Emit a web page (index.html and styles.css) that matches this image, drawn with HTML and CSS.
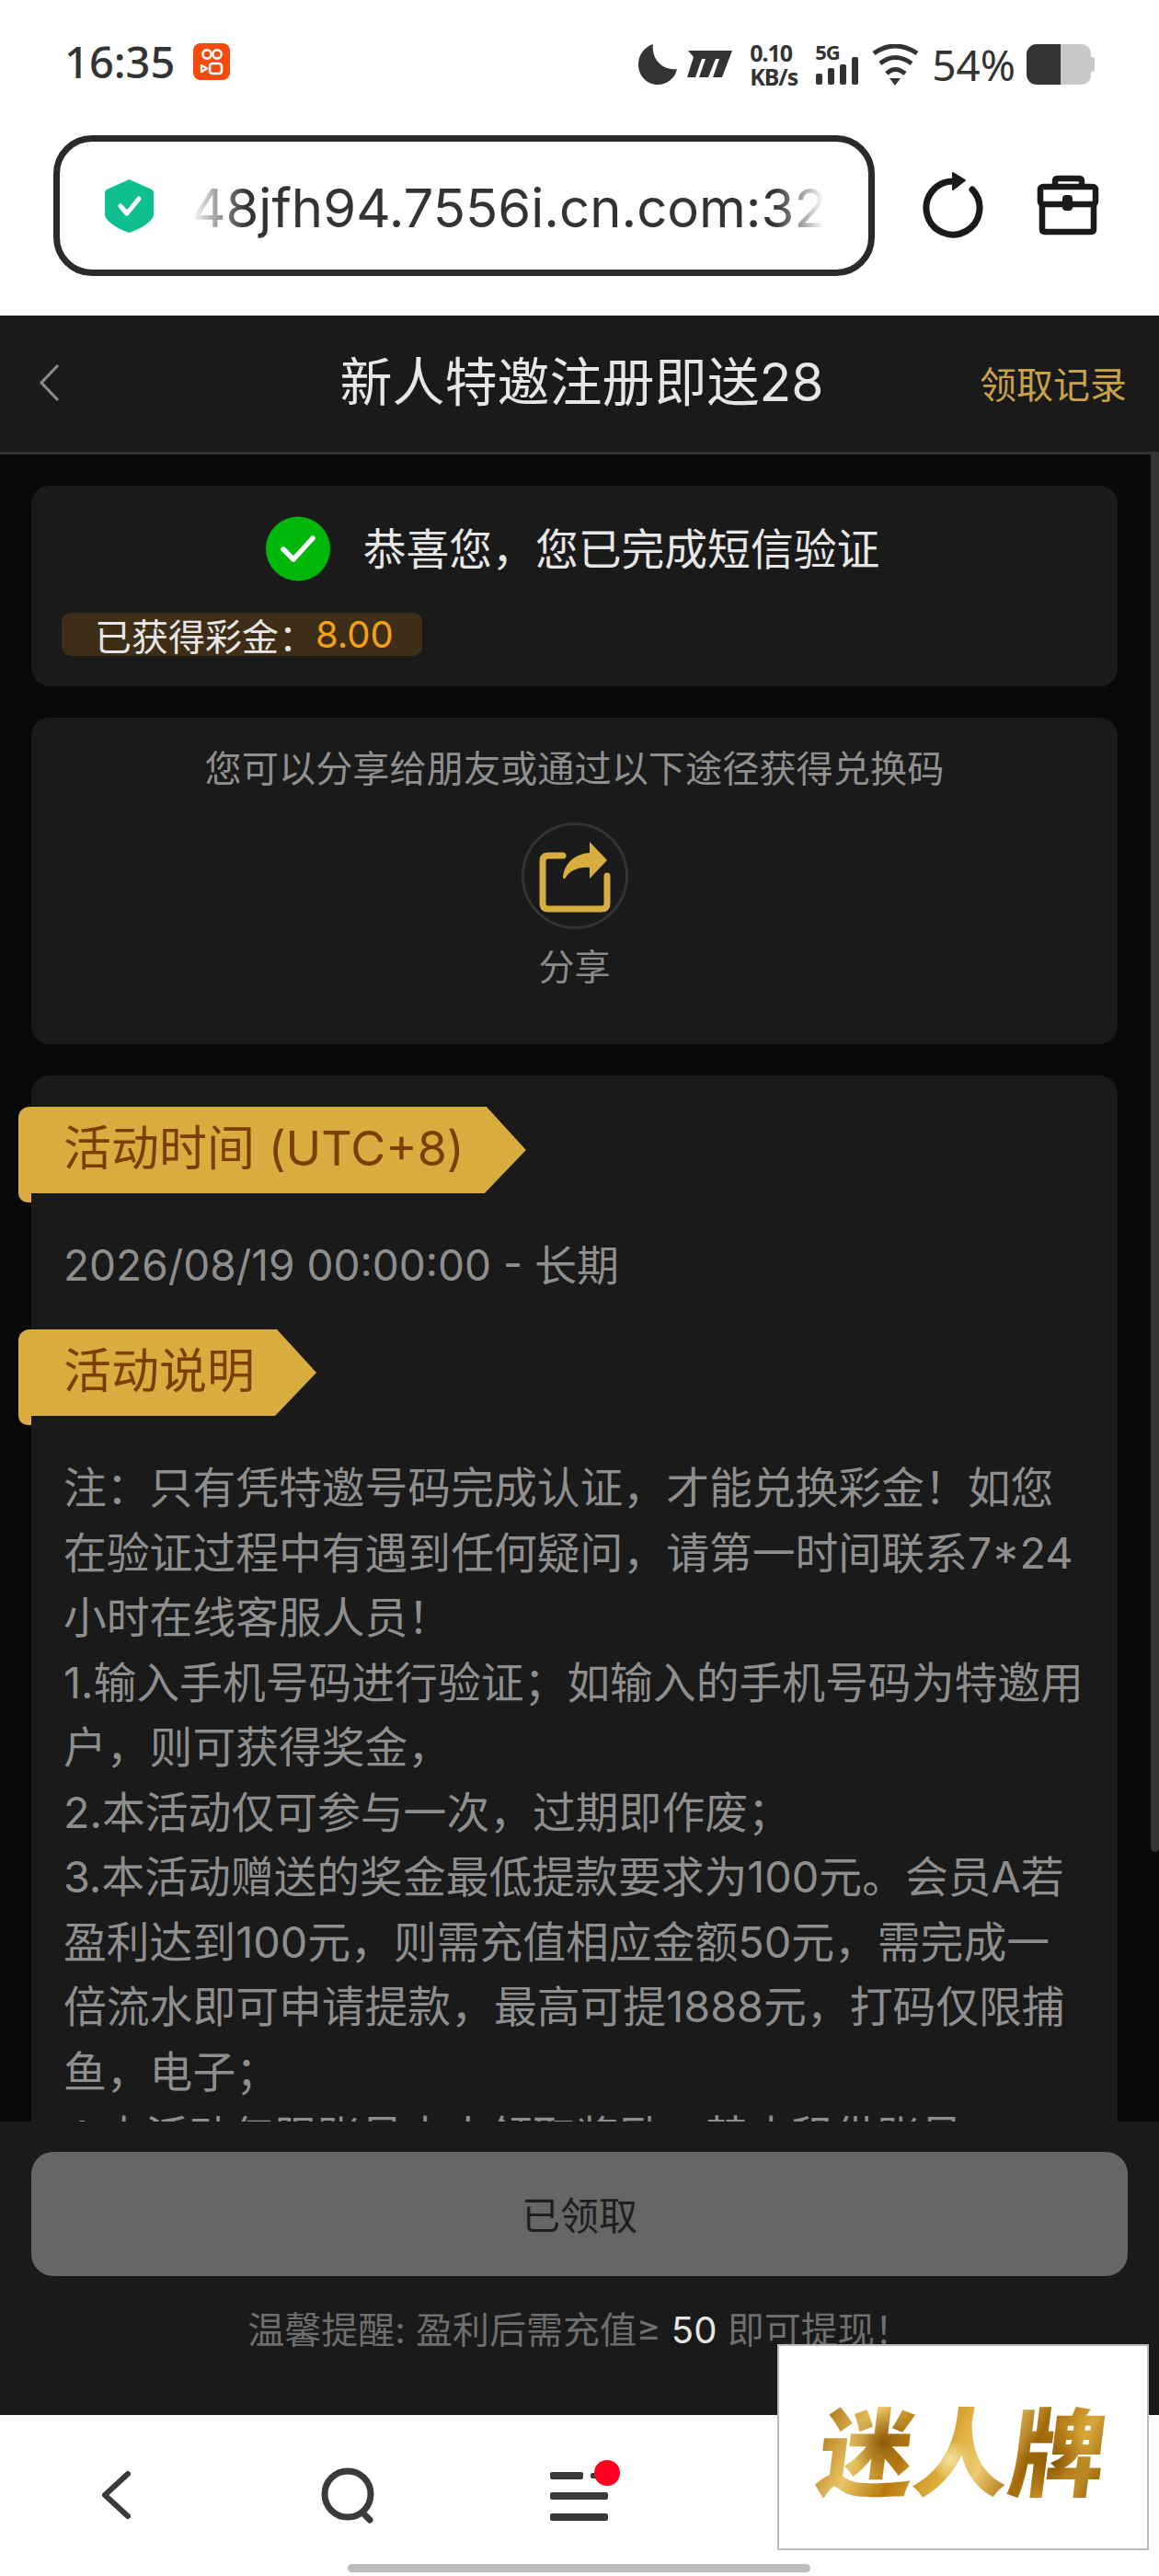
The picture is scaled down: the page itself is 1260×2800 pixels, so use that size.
FILE: index.html
```html
<!DOCTYPE html>
<html lang="zh-CN">
<head>
    <meta charset="UTF-8">
    <meta name="viewport" content="width=device-width, initial-scale=1.0">
    <title>新人特邀注册即送28</title>
    <link rel="stylesheet" href="styles.css">
</head>
<body>
    <header class="browser-top">
        <div class="status-bar">
            <div class="status-left">
                <span class="clock">16:35</span>
                <svg class="app-icon" width="40" height="40" viewBox="0 0 40 40">
                    <rect width="40" height="40" rx="8" fill="#f64a0f"/>
                    <circle cx="15" cy="12" r="4.6" fill="none" stroke="#fff" stroke-width="2.6"/>
                    <circle cx="26" cy="12" r="4.6" fill="none" stroke="#fff" stroke-width="2.6"/>
                    <rect x="18" y="22" width="13" height="11" rx="3" fill="none" stroke="#fff" stroke-width="2.6"/>
                    <path d="M9 24 L15 27.5 L9 31Z" fill="none" stroke="#fff" stroke-width="2.2" stroke-linejoin="round"/>
                </svg>
            </div>
            <div class="status-right">
                <svg width="42" height="44" viewBox="0 0 42 44"><path fill="#333" d="M16 0C14 14 24 29 42 27C40 37 31 44 21 44C9 44 0 34 0 22C0 11 7 3 16 0Z"/></svg>
                <svg class="carrier" width="49" height="30" viewBox="0 0 49 30"><path fill="#333" d="M1 0H49L38 29H28L35 9H31L23 29H13L20 9H16L9 29H0L7 7Z"/></svg>
                <div class="net-speed"><span>0.10</span><span>KB/s</span></div>
                <div class="signal">
                    <span class="signal-label">5G</span>
                    <svg width="48" height="30" viewBox="0 0 48 30">
                        <rect x="1" y="18" width="7" height="12" rx="2" fill="#333"/>
                        <rect x="14" y="12" width="7" height="18" rx="2" fill="#333"/>
                        <rect x="27" y="8" width="7" height="22" rx="2" fill="#333"/>
                        <rect x="40" y="0" width="7" height="30" rx="2" fill="#333"/>
                    </svg>
                </div>
                <svg class="wifi" width="52" height="45" viewBox="0 0 52 45">
                    <g fill="none" stroke="#333" stroke-width="5">
                        <path d="M3 10Q26 -6 50 10"/>
                        <path d="M10 21Q26 8 44 21"/>
                        <path d="M17 32Q26 23 37 32"/>
                    </g>
                    <path fill="#333" d="M20 37H32L26 45Z"/>
                </svg>
                <span class="battery-text">54%</span>
                <div class="battery"><span class="battery-fill"></span><span class="battery-empty"></span><span class="battery-nub"></span></div>
            </div>
        </div>
        <div class="toolbar">
            <div class="url-box">
                <svg class="shield" width="53" height="58" viewBox="0 0 53 58">
                    <path fill="#0fbf8f" d="M26.5 0L51 11Q53 12 53 15V38C53 46 36 55 26.5 58C17 55 0 46 0 38V15Q0 12 2 11Z"/>
                    <path fill="none" stroke="#fff" stroke-width="5" stroke-linecap="round" stroke-linejoin="round" d="M17 29L24 37L37 21"/>
                </svg>
                <span class="url-text">48jfh94.7556i.cn.com:324</span>
            </div>
            <svg class="reload" width="72" height="76" viewBox="0 -4 72 76">
                <path fill="none" stroke="#1a1a1a" stroke-width="7" stroke-linecap="round" d="M57 16A29 29 0 1 1 36 7"/>
                <path fill="#1a1a1a" stroke="#1a1a1a" stroke-width="2" stroke-linejoin="round" d="M36 -2L49 6L36 16Z"/>
            </svg>
            <svg class="toolbox" width="70" height="70" viewBox="0 0 70 70">
                <g fill="none" stroke="#1a1a1a" stroke-width="6.5" stroke-linejoin="round">
                    <rect x="5" y="14" width="60" height="19" rx="3"/>
                    <path d="M7 33V60Q7 63 10 63H60Q63 63 63 60V33"/>
                    <path d="M21 13V8Q21 5 24 5H47Q50 5 50 8V13"/>
                </g>
                <rect x="29" y="23" width="11" height="17" rx="4" fill="#1a1a1a"/>
            </svg>
        </div>
    </header>

    <div class="page-nav">
        <svg class="nav-back" width="26" height="42" viewBox="0 0 26 42"><path fill="none" stroke="#8f8f8f" stroke-width="3" d="M23 2L5 21L23 40"/></svg>
        <h1 class="nav-title">新人特邀注册即送28</h1>
        <span class="nav-link">领取记录</span>
    </div>

    <main class="content">
        <section class="card result-card">
            <div class="result-row">
                <svg width="70" height="71" viewBox="0 0 70 71">
                    <circle cx="35" cy="35.5" r="35" fill="#00b80a"/>
                    <path fill="none" stroke="#fff" stroke-width="5.5" stroke-linecap="round" stroke-linejoin="round" d="M19 36L30 47L51 24"/>
                </svg>
                <span class="result-text">恭喜您&#xFF0C;您已完成短信验证</span>
            </div>
            <div class="bonus-badge">已获得彩金&#xFF1A;<span class="bonus-amount">8.00</span></div>
        </section>

        <section class="card share-card">
            <p class="share-tip">您可以分享给朋友或通过以下途径获得兑换码</p>
            <div class="share-circle">
                <svg width="116" height="116" viewBox="0 0 116 116">
                    <path fill="none" stroke="#d8ac3e" stroke-width="7" stroke-linecap="round" d="M45 36H29Q23 36 23 42V88Q23 94 29 94H87Q93 94 93 88V58"/>
                    <path fill="#d8ac3e" d="M74 21L93 41L74 61V49C62 48 53 52 48 60Q45 63 45 59C47 44 58 34 74 33Z"/>
                </svg>
            </div>
            <div class="share-label">分享</div>
        </section>

        <section class="card info-card">
            <div class="ribbon"><h2 class="ribbon-body">活动时间 (UTC+8)</h2></div>
            <p class="info-date">2026/08/19 00:00:00 - 长期</p>
            <div class="ribbon ribbon-second"><h2 class="ribbon-body">活动说明</h2></div>
            <p class="info-text">
                注&#xFF1A;只有凭特邀号码完成认证&#xFF0C;才能兑换彩金&#xFF01;如您<br>
                在验证过程中有遇到任何疑问&#xFF0C;请第一时间联系7*24<br>
                小时在线客服人员&#xFF01;<br>
                1.输入手机号码进行验证&#xFF1B;如输入的手机号码为特邀用<br>
                户&#xFF0C;则可获得奖金&#xFF0C;<br>
                2.本活动仅可参与一次&#xFF0C;过期即作废&#xFF1B;<br>
                3.本活动赠送的奖金最低提款要求为100元。会员A若<br>
                盈利达到100元&#xFF0C;则需充值相应金额50元&#xFF0C;需完成一<br>
                倍流水即可申请提款&#xFF0C;最高可提1888元&#xFF0C;打码仅限捕<br>
                鱼&#xFF0C;电子&#xFF1B;<br>
                4.本活动仅限账号本人领取奖励&#xFF0C;禁止租借账号&#xFF0C;一
            </p>
        </section>
        <div class="scroll-thumb"></div>
    </main>

    <footer class="claim-bar">
        <button class="claim-button" type="button">已领取</button>
        <p class="claim-note">温馨提醒: 盈利后需充值≥ <span class="claim-num">50</span> 即可提现&#xFF01;</p>
    </footer>

    <nav class="bottom-nav">
        <svg width="44" height="72" viewBox="0 0 44 72"><path fill="none" stroke="#3a3a3a" stroke-width="6" stroke-linecap="round" stroke-linejoin="round" d="M35 16L10 39L35 62"/></svg>
        <svg width="72" height="72" viewBox="0 0 72 72">
            <ellipse cx="36" cy="38" rx="25" ry="25" fill="none" stroke="#3a3a3a" stroke-width="7"/>
            <path fill="none" stroke="#3a3a3a" stroke-width="7" stroke-linecap="round" d="M52 58L60 66"/>
        </svg>
        <svg width="90" height="72" viewBox="0 0 90 72">
            <g fill="#3a3a3a">
                <rect x="13" y="14" width="36" height="8" rx="2"/>
                <rect x="13" y="36" width="63" height="8" rx="2"/>
                <rect x="13" y="59" width="63" height="8" rx="2"/>
                <rect x="57" y="15" width="8" height="6" rx="2"/>
            </g>
            <circle cx="75" cy="15" r="14" fill="#ff0022"/>
        </svg>
        <div class="home-bar"></div>
    </nav>

    <div class="logo-box"><span class="logo-text">迷人牌</span></div>
</body>
</html>
```

FILE: styles.css
```css
* {
    box-sizing: border-box;
}
body {
    margin: 0;
    width: 1260px;
    height: 2800px;
    overflow: hidden;
    position: relative;
    display: flex;
    flex-direction: column;
    background: #fff;
    font-family: Inter, "Noto Sans CJK SC", sans-serif;
}
h1, h2, p {
    margin: 0;
    font-weight: 400;
}

/* phone status + browser toolbar */
.browser-top {
    height: 343px;
    background: #fff;
}
.status-bar {
    height: 134px;
    display: flex;
    justify-content: space-between;
    align-items: center;
    font-family: "Noto Sans", sans-serif;
    color: #333;
}
.status-left {
    display: flex;
    align-items: center;
    gap: 20px;
    padding-left: 70px;
}
.clock {
    font-size: 47px;
    font-weight: 500;
    line-height: 40px;
}
.status-right {
    display: flex;
    align-items: center;
    padding-right: 70px;
    margin-top: 6px;
}
.carrier {
    margin-left: 11px;
}
.net-speed {
    display: flex;
    flex-direction: column;
    margin-left: 19px;
    width: 54px;
    font-size: 25px;
    font-weight: 700;
    line-height: 26px;
    letter-spacing: -1px;
}
.signal {
    display: flex;
    flex-direction: column;
    align-items: flex-start;
    margin-left: 17px;
    height: 44px;
}
.signal-label {
    font-size: 22px;
    font-weight: 700;
    line-height: 16px;
    letter-spacing: -1px;
}
.signal svg {
    margin-top: -2px;
}
.wifi {
    margin-left: 13px;
}
.battery-text {
    margin-left: 14px;
    font-size: 46px;
    line-height: 44px;
}
.battery {
    display: flex;
    align-items: center;
    margin-left: 12px;
    height: 44px;
}
.battery-fill {
    width: 37px;
    height: 44px;
    background: #333;
    border-radius: 11px 0 0 11px;
}
.battery-empty {
    width: 33px;
    height: 44px;
    background: #c8c8c8;
    border-radius: 0 10px 10px 0;
}
.battery-nub {
    width: 4px;
    height: 16px;
    background: #c8c8c8;
    border-radius: 0 3px 3px 0;
}

.toolbar {
    display: flex;
    align-items: center;
    padding: 13px 0 0 58px;
}
.url-box {
    width: 893px;
    height: 153px;
    display: flex;
    align-items: center;
    padding-left: 49px;
    border: 7px solid #2a2a2a;
    border-radius: 42px;
    overflow: hidden;
}
.url-text {
    width: 688px;
    margin-left: 41px;
    padding-top: 5px;
    overflow: hidden;
    white-space: nowrap;
    font-size: 58px;
    line-height: 84px;
    color: #333;
    -webkit-mask-image: linear-gradient(to right, transparent 0, #000 60px, #000 634px, transparent 688px);
    mask-image: linear-gradient(to right, transparent 0, #000 60px, #000 634px, transparent 688px);
}
.reload {
    margin-left: 49px;
}
.toolbox {
    margin-left: 54px;
}

/* dark page header */
.page-nav {
    height: 151px;
    display: grid;
    grid-template-columns: 1fr auto 1fr;
    align-items: center;
    padding: 0 35px 3px 40px;
    background: #1a1a1a;
    border-bottom: 3px solid #333;
}
.nav-title {
    font-size: 57px;
    line-height: 70px;
    color: #e6e6e6;
}
.nav-link {
    justify-self: end;
    font-size: 40px;
    color: #c9a24a;
}

/* scrolling area */
.content {
    flex: 1;
    position: relative;
    display: flex;
    flex-direction: column;
    gap: 34px;
    padding: 34px 45px 0 34px;
    background: #080808;
    overflow: hidden;
}
.card {
    flex-shrink: 0;
    background: #1a1a1a;
    border-radius: 20px;
}
.scroll-thumb {
    position: absolute;
    top: 0;
    right: 0;
    width: 9px;
    height: 1519px;
    background: #333;
    border-radius: 0 0 5px 5px;
}

.result-card {
    height: 218px;
    padding: 33px;
}
.result-row {
    display: flex;
    justify-content: center;
    align-items: center;
    gap: 36px;
    padding-right: 4px;
    height: 71px;
}
.result-text {
    font-size: 46.8px;
    line-height: 60px;
    color: #e6e6e6;
}
.bonus-badge {
    display: flex;
    align-items: center;
    width: 392px;
    height: 47px;
    margin-top: 34px;
    padding-left: 36px;
    background: #3e2e18;
    border-radius: 10px;
    font-size: 40px;
    color: #e6e6e6;
}
.bonus-amount {
    color: #f5a117;
    font-size: 40px;
}

.share-card {
    height: 355px;
    padding-top: 32px;
    text-align: center;
}
.share-tip {
    font-size: 40.2px;
    line-height: 48px;
    color: #8f8f8f;
}
.share-circle {
    width: 116px;
    height: 116px;
    margin: 34px auto 0;
    border: 3px solid #333;
    border-radius: 50%;
}
.share-circle svg {
    display: block;
    margin: -3px;
}
.share-label {
    margin-top: 17px;
    font-size: 39px;
    line-height: 48px;
    color: #8a8a8a;
}

.info-card {
    height: 1300px;
    padding: 34px 35px;
}
.ribbon {
    position: relative;
    width: max-content;
    margin-left: -49px;
}
.ribbon::before {
    content: "";
    position: absolute;
    left: 0;
    top: 84px;
    width: 14px;
    height: 20px;
    background: #d8ac3e;
    border-radius: 0 0 0 10px;
}
.ribbon-body {
    position: relative;
    height: 94px;
    padding: 0 67px 0 49px;
    background: #d8ac3e;
    border-radius: 12px 0 0 0;
    clip-path: polygon(0 0, calc(100% - 43px) 0, 100% 50%, calc(100% - 45px) 100%, 0 100%);
    font-size: 52px;
    line-height: 92px;
    color: #7a3e00;
}
.ribbon-second {
    margin-top: 40px;
}
.info-date {
    margin-top: 48px;
    font-size: 46px;
    line-height: 60px;
    color: #8e8e8e;
}
.info-text {
    margin-top: 43px;
    font-size: 46.8px;
    line-height: 70.5px;
    color: #8e8e8e;
    white-space: nowrap;
}

/* fixed bottom action */
.claim-bar {
    height: 319px;
    flex-shrink: 0;
    padding-top: 33px;
    background: #1a1a1a;
    text-align: center;
}
.claim-button {
    display: block;
    width: 1192px;
    height: 135px;
    margin-left: 34px;
    padding-bottom: 4px;
    border: none;
    border-radius: 24px;
    background: #666;
    font-family: inherit;
    font-size: 42px;
    color: #1e1e1e;
}
.claim-note {
    margin-top: 35px;
    font-size: 40px;
    line-height: 48px;
    color: #6e6e6e;
}
.claim-num {
    color: #e6e6e6;
}

/* browser bottom bar */
.bottom-nav {
    height: 175px;
    flex-shrink: 0;
    position: relative;
    display: grid;
    grid-template-columns: repeat(5, 252px);
    justify-items: center;
    padding-top: 48px;
    background: #fff;
}
.home-bar {
    position: absolute;
    left: 378px;
    bottom: 4px;
    width: 503px;
    height: 9px;
    border-radius: 5px;
    background: #bdbdbd;
}
.logo-box {
    position: absolute;
    left: 845px;
    top: 2548px;
    width: 404px;
    height: 224px;
    display: flex;
    align-items: center;
    justify-content: center;
    background: #fff;
    border: 2px solid #bbb;
}
.logo-text {
    font-family: "Noto Sans CJK SC", sans-serif;
    font-size: 104px;
    font-weight: 900;
    line-height: 110px;
    transform: skewX(-7deg);
    color: transparent;
    background:
        radial-gradient(circle at 22% 45%, #8f5a05 0, transparent 14%),
        radial-gradient(circle at 46% 62%, #f6e3a0 0, transparent 12%),
        radial-gradient(circle at 62% 35%, #96600a 0, transparent 10%),
        radial-gradient(circle at 82% 65%, #8a5604 0, transparent 15%),
        linear-gradient(110deg, #a86c08 0%, #e9c566 18%, #b87a10 32%, #e0b040 48%, #eecb72 58%, #a36a08 72%, #d9a838 86%, #8f5a05 100%);
    -webkit-background-clip: text;
    background-clip: text;
}
```
